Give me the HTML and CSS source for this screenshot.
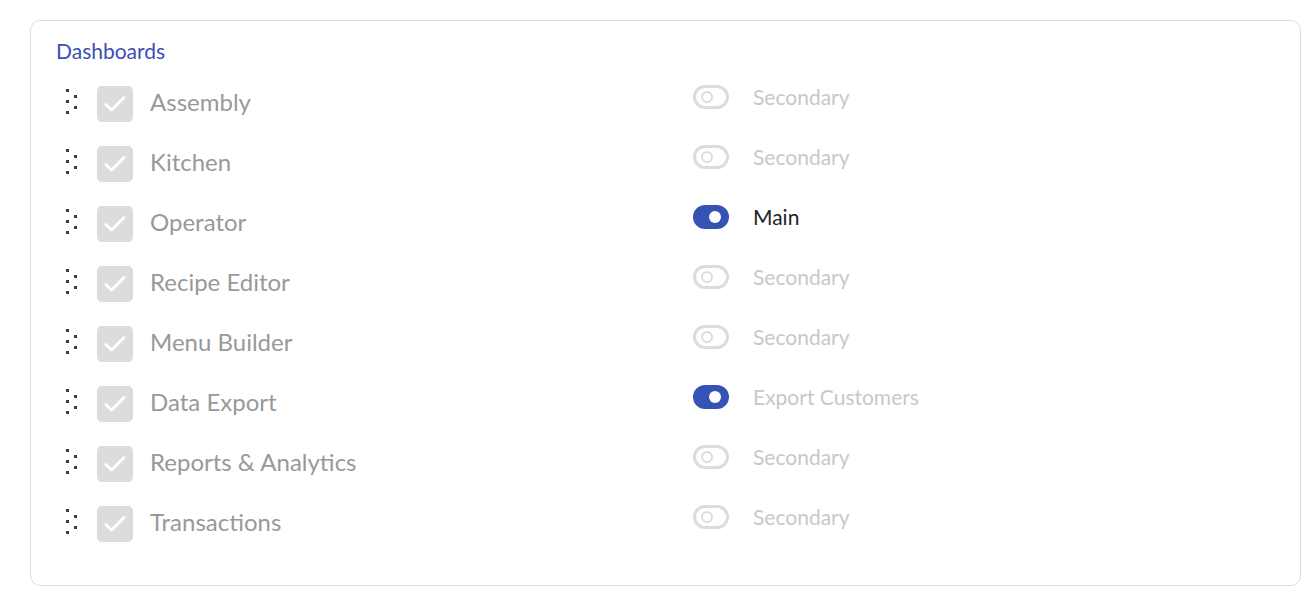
FILE: index.html
```html
<!DOCTYPE html>
<html>
<head>
<meta charset="utf-8">
<link rel="stylesheet" href="styles.css">
</head>
<body>
<div class="card">
  <div class="title">Dashboards</div>
  <div class="list">
    <div class="row">
      <div class="left">
        <span class="handle"><i></i><i></i><i></i><i></i><i></i></span>
        <span class="check"><svg viewBox="0 0 36 36"><polyline points="9,18.5 14.5,24 27,11.5"/></svg></span>
        <span class="name">Assembly</span>
      </div>
      <div class="right"><span class="toggle"></span><span class="label">Secondary</span></div>
    </div>
    <div class="row">
      <div class="left">
        <span class="handle"><i></i><i></i><i></i><i></i><i></i></span>
        <span class="check"><svg viewBox="0 0 36 36"><polyline points="9,18.5 14.5,24 27,11.5"/></svg></span>
        <span class="name">Kitchen</span>
      </div>
      <div class="right"><span class="toggle"></span><span class="label">Secondary</span></div>
    </div>
    <div class="row">
      <div class="left">
        <span class="handle"><i></i><i></i><i></i><i></i><i></i></span>
        <span class="check"><svg viewBox="0 0 36 36"><polyline points="9,18.5 14.5,24 27,11.5"/></svg></span>
        <span class="name">Operator</span>
      </div>
      <div class="right"><span class="toggle on"></span><span class="label main">Main</span></div>
    </div>
    <div class="row">
      <div class="left">
        <span class="handle"><i></i><i></i><i></i><i></i><i></i></span>
        <span class="check"><svg viewBox="0 0 36 36"><polyline points="9,18.5 14.5,24 27,11.5"/></svg></span>
        <span class="name">Recipe Editor</span>
      </div>
      <div class="right"><span class="toggle"></span><span class="label">Secondary</span></div>
    </div>
    <div class="row">
      <div class="left">
        <span class="handle"><i></i><i></i><i></i><i></i><i></i></span>
        <span class="check"><svg viewBox="0 0 36 36"><polyline points="9,18.5 14.5,24 27,11.5"/></svg></span>
        <span class="name">Menu Builder</span>
      </div>
      <div class="right"><span class="toggle"></span><span class="label">Secondary</span></div>
    </div>
    <div class="row">
      <div class="left">
        <span class="handle"><i></i><i></i><i></i><i></i><i></i></span>
        <span class="check"><svg viewBox="0 0 36 36"><polyline points="9,18.5 14.5,24 27,11.5"/></svg></span>
        <span class="name">Data Export</span>
      </div>
      <div class="right"><span class="toggle on"></span><span class="label">Export Customers</span></div>
    </div>
    <div class="row">
      <div class="left">
        <span class="handle"><i></i><i></i><i></i><i></i><i></i></span>
        <span class="check"><svg viewBox="0 0 36 36"><polyline points="9,18.5 14.5,24 27,11.5"/></svg></span>
        <span class="name">Reports &amp; Analytics</span>
      </div>
      <div class="right"><span class="toggle"></span><span class="label">Secondary</span></div>
    </div>
    <div class="row">
      <div class="left">
        <span class="handle"><i></i><i></i><i></i><i></i><i></i></span>
        <span class="check"><svg viewBox="0 0 36 36"><polyline points="9,18.5 14.5,24 27,11.5"/></svg></span>
        <span class="name">Transactions</span>
      </div>
      <div class="right"><span class="toggle"></span><span class="label">Secondary</span></div>
    </div>
  </div>
</div>
</body>
</html>
```
FILE: styles.css
```css
html, body {
  margin: 0;
  padding: 0;
  background: #fff;
}
body {
  padding: 20px 9px 0 30px;
  font-family: Lato, "Open Sans", sans-serif;
}
.card {
  border: 1px solid #dcdcdc;
  border-radius: 10px;
  height: 566px;
  box-sizing: border-box;
  padding: 17px 24px 0 24px;
}
.title {
  font-size: 21px;
  line-height: 26px;
  color: #3a4fb8;
  margin-left: 1px;
}
.list {
  margin-top: 8px;
}
.row {
  display: flex;
  height: 60px;
  align-items: center;
}
.left {
  width: 638px;
  display: flex;
  align-items: center;
}
.handle {
  position: relative;
  width: 11px;
  height: 26px;
  margin-left: 11px;
  margin-right: 20px;
}
.handle i {
  position: absolute;
  width: 3px;
  height: 3px;
  background: #3d3d3d;
}
.handle i:nth-child(1) { left: 0; top: 0; }
.handle i:nth-child(2) { left: 8px; top: 6px; }
.handle i:nth-child(3) { left: 0; top: 11px; }
.handle i:nth-child(4) { left: 8px; top: 17px; }
.handle i:nth-child(5) { left: 0; top: 22px; }
.check {
  width: 36px;
  height: 36px;
  margin-top: 4px;
  border-radius: 5px;
  background: #dcdcdc;
  display: flex;
}
.check svg {
  width: 36px;
  height: 36px;
}
.check polyline {
  fill: none;
  stroke: #fff;
  stroke-width: 2.8;
  stroke-linecap: round;
  stroke-linejoin: round;
}
.name {
  margin-left: 17px;
  font-size: 24px;
  line-height: 30px;
  color: #999;
}
.right {
  display: flex;
  align-items: center;
  margin-bottom: 10px;
}
.toggle {
  position: relative;
  width: 36px;
  height: 24px;
  box-sizing: border-box;
  border: 3px solid #dcdcdc;
  border-radius: 12px;
  background: #fff;
}
.toggle::after {
  content: "";
  position: absolute;
  left: 5px;
  top: 3px;
  width: 12px;
  height: 12px;
  box-sizing: border-box;
  border: 2.5px solid #dcdcdc;
  border-radius: 50%;
}
.toggle.on {
  background: #3553b5;
  border-color: #3553b5;
}
.toggle.on::after {
  left: auto;
  right: 5px;
  border: none;
  background: #fff;
}
.label {
  margin-left: 24px;
  font-size: 21px;
  line-height: 26px;
  color: #c8c8c8;
}
.label.main {
  color: #222;
}
```
